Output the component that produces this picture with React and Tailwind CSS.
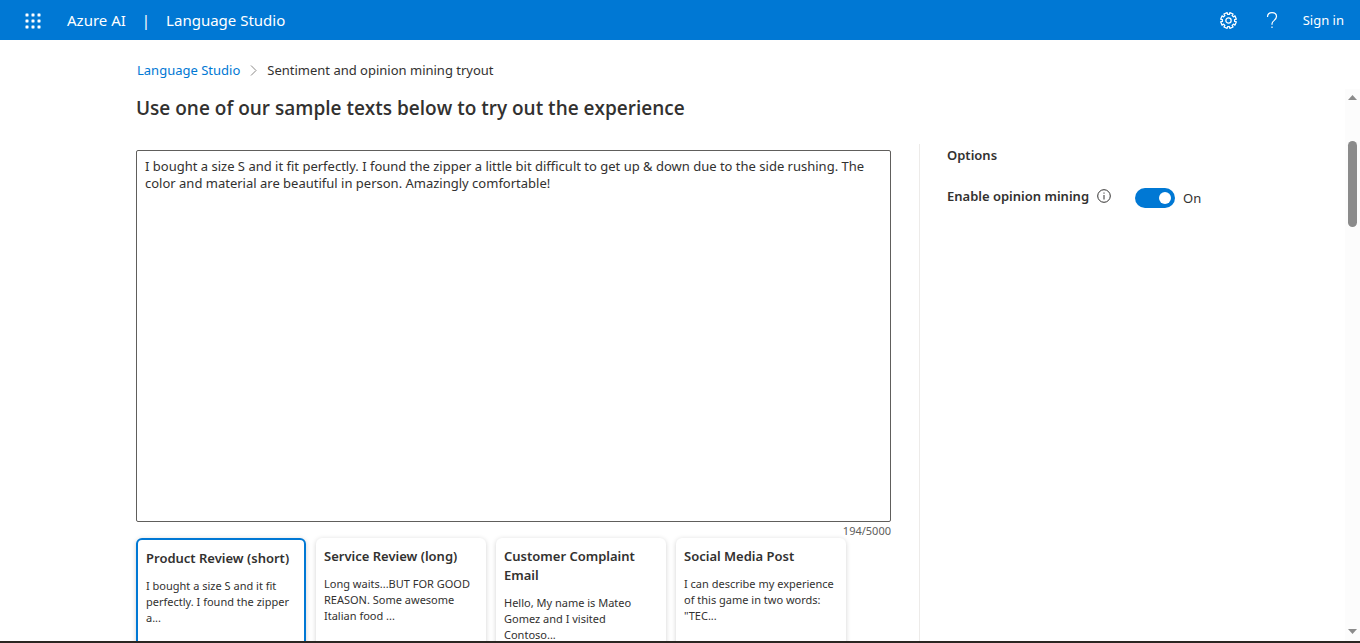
import { useState } from "react";

const SAMPLES = [
  {
    title: "Product Review (short)",
    preview: "I bought a size S and it fit perfectly. I found the zipper a...",
  },
  {
    title: "Service Review (long)",
    preview: "Long waits...BUT FOR GOOD REASON. Some awesome Italian food ...",
  },
  {
    title: "Customer Complaint Email",
    preview: "Hello, My name is Mateo Gomez and I visited Contoso...",
  },
  {
    title: "Social Media Post",
    preview: 'I can describe my experience of this game in two words: "TEC...',
  },
];

const REVIEW =
  "I bought a size S and it fit perfectly. I found the zipper a little bit difficult to get up & down due to the side rushing. The color and material are beautiful in person. Amazingly comfortable!";

function WaffleIcon() {
  const steps = [0, 6, 12];
  return (
    <svg className="size-4" viewBox="0 0 16 16" fill="currentColor" aria-hidden="true">
      {steps.map((y) =>
        steps.map((x) => <rect key={`${x}-${y}`} x={x + 0.5} y={y + 0.5} width="3" height="3" rx="0.4" />),
      )}
    </svg>
  );
}

function gearPath() {
  const points = [];
  const teeth = 8;
  for (let i = 0; i < teeth; i++) {
    const base = ((i + 0.5) * 2 * Math.PI) / teeth;
    [
      [-0.24, 5.8],
      [-0.22, 7.5],
      [0.22, 7.5],
      [0.24, 5.8],
    ].forEach(([offset, radius]) => {
      const a = base + offset;
      points.push(`${(8 + radius * Math.cos(a)).toFixed(2)} ${(8 + radius * Math.sin(a)).toFixed(2)}`);
    });
  }
  return `M${points.join("L")}Z`;
}

function GearIcon() {
  return (
    <svg
      className="size-[17px]"
      viewBox="0 0 16 16"
      fill="none"
      stroke="currentColor"
      strokeWidth="1.2"
      strokeLinejoin="round"
      aria-hidden="true"
    >
      <path d={gearPath()} />
      <circle cx="8" cy="8" r="2.5" />
    </svg>
  );
}

function HelpIcon() {
  return (
    <svg
      className="h-4 w-3"
      viewBox="0 0 12 16"
      fill="none"
      stroke="currentColor"
      strokeWidth="1.2"
      aria-hidden="true"
    >
      <path d="M1.5 5C1.500 2.300 3.400.6 6 .6s4.500 1.600 4.500 4c0 1.800-1 2.700-2.300 3.800C6.800 9.500 6 10.300 6 11.800v1" />
      <path d="M6 14.500V16" />
    </svg>
  );
}

function InfoIcon() {
  return (
    <svg className="size-[14px]" viewBox="0 0 14 14" fill="none" stroke="currentColor" aria-hidden="true">
      <circle cx="7" cy="7" r="6.300" />
      <path d="M7 6v4.500M7 3.500v1.200" />
    </svg>
  );
}

function Header() {
  return (
    <header className="flex h-10 shrink-0 items-center bg-[#0078d4] pr-4 pl-6 text-white">
      <button type="button" aria-label="App launcher" className="flex size-[17px] items-center justify-center pt-0.5">
        <WaffleIcon />
      </button>
      <a href="#azure" className="ml-[26px] text-[15px] leading-5">
        Azure AI
      </a>
      <span className="mx-4 text-[15px] leading-5">|</span>
      <a href="#studio" className="text-[15px] leading-5">
        Language Studio
      </a>
      <div className="ml-auto flex items-center">
        <button type="button" aria-label="Settings">
          <GearIcon />
        </button>
        <button type="button" aria-label="Help" className="mr-[25px] ml-[29px]">
          <HelpIcon />
        </button>
        <a href="#signin" className="text-[13px] leading-5">
          Sign in
        </a>
      </div>
    </header>
  );
}

function SampleCard({ title, preview, selected, onSelect }) {
  return (
    <button
      type="button"
      aria-pressed={selected}
      onClick={onSelect}
      className={`flex h-[150px] w-[170px] shrink-0 flex-col items-start rounded-md bg-white px-2 pt-[9px] text-left shadow-[0_1px_5px_rgba(0,0,0,0.18)] ${
        selected ? "border-2 border-[#0078d4]" : ""
      }`}
    >
      <span className="text-[13px] leading-[19px] font-semibold">{title}</span>
      <span className="mt-[10px] text-[11px] leading-4">{preview}</span>
    </button>
  );
}

function ScrollRail() {
  return (
    <div className="flex w-[15px] shrink-0 flex-col items-center bg-[#fcfcfc] pt-1.5 pb-[7px] text-[#8b8b8b]" aria-hidden="true">
      <svg className="h-[5px] w-[9px]" viewBox="0 0 9 5" fill="currentColor">
        <path d="M4.500 0 9 5H0z" />
      </svg>
      <div className="mt-[41px] h-[86px] w-[9px] rounded-full bg-[#8b8b8b]" />
      <svg className="mt-auto h-[5px] w-[9px]" viewBox="0 0 9 5" fill="currentColor">
        <path d="M4.500 5 9 0H0z" />
      </svg>
    </div>
  );
}

export default function App() {
  const [text, setText] = useState(REVIEW);
  const [active, setActive] = useState(0);
  const [mining, setMining] = useState(true);

  return (
    <div className="flex h-screen flex-col overflow-hidden border-b-2 border-[#2b2622] bg-white font-['Noto_Sans','Open_Sans',sans-serif] text-[#323130]">
      <Header />
      <nav aria-label="Breadcrumb" className="flex h-[49px] shrink-0 items-center pt-[11px] pl-[137px] text-[13px] leading-5">
        <a href="#home" className="text-[#0078d4]">
          Language Studio
        </a>
        <svg className="mx-[10px] h-[11px] w-[7px]" viewBox="0 0 7 11" fill="none" stroke="#8a8886" aria-hidden="true">
          <path d="M1 .5l5 5-5 5" />
        </svg>
        <span>Sentiment and opinion mining tryout</span>
      </nav>
      <div className="flex min-h-0 flex-1">
        <main className="min-w-0 flex-1 overflow-hidden pl-[136px]">
          <h1 className="pt-[5px] font-['Open_Sans','Noto_Sans',sans-serif] text-[19px] leading-7 font-semibold">
            Use one of our sample texts below to try out the experience
          </h1>
          <div className="mt-[22px] flex">
            <section className="min-w-0 flex-1 pt-[6px] pr-7">
              <textarea
                aria-label="Sample text"
                value={text}
                onChange={(e) => setText(e.target.value)}
                className="block h-[372px] w-full resize-none rounded-xs border border-[#605e5c] px-2 py-[7px] text-[13px] leading-[17px] outline-none"
              />
              <p className="pt-px text-right text-[11px] leading-[15px] text-[#605e5c]">{text.length}/5000</p>
              <div className="flex gap-[10px]">
                {SAMPLES.map((sample, i) => (
                  <SampleCard key={sample.title} {...sample} selected={i === active} onSelect={() => setActive(i)} />
                ))}
              </div>
            </section>
            <aside className="w-[426px] shrink-0 border-l border-[#edebe9] pt-px pl-[27px] text-[13px]">
              <h2 className="leading-5 font-semibold">Options</h2>
              <div className="mt-[21px] flex items-start">
                <label htmlFor="mining" className="leading-5 font-semibold">
                  Enable opinion mining
                </label>
                <button type="button" aria-label="About opinion mining" className="mt-[3px] ml-2">
                  <InfoIcon />
                </button>
                <div className="mt-0.5 ml-6 flex items-center">
                  <input
                    id="mining"
                    type="checkbox"
                    role="switch"
                    checked={mining}
                    onChange={(e) => setMining(e.target.checked)}
                    className="flex h-5 w-10 appearance-none items-center rounded-full bg-[#8a8886] px-1 before:size-3 before:rounded-full before:bg-white checked:justify-end checked:bg-[#0078d4]"
                  />
                  <span className="ml-2 leading-5">{mining ? "On" : "Off"}</span>
                </div>
              </div>
            </aside>
          </div>
        </main>
        <ScrollRail />
      </div>
    </div>
  );
}
